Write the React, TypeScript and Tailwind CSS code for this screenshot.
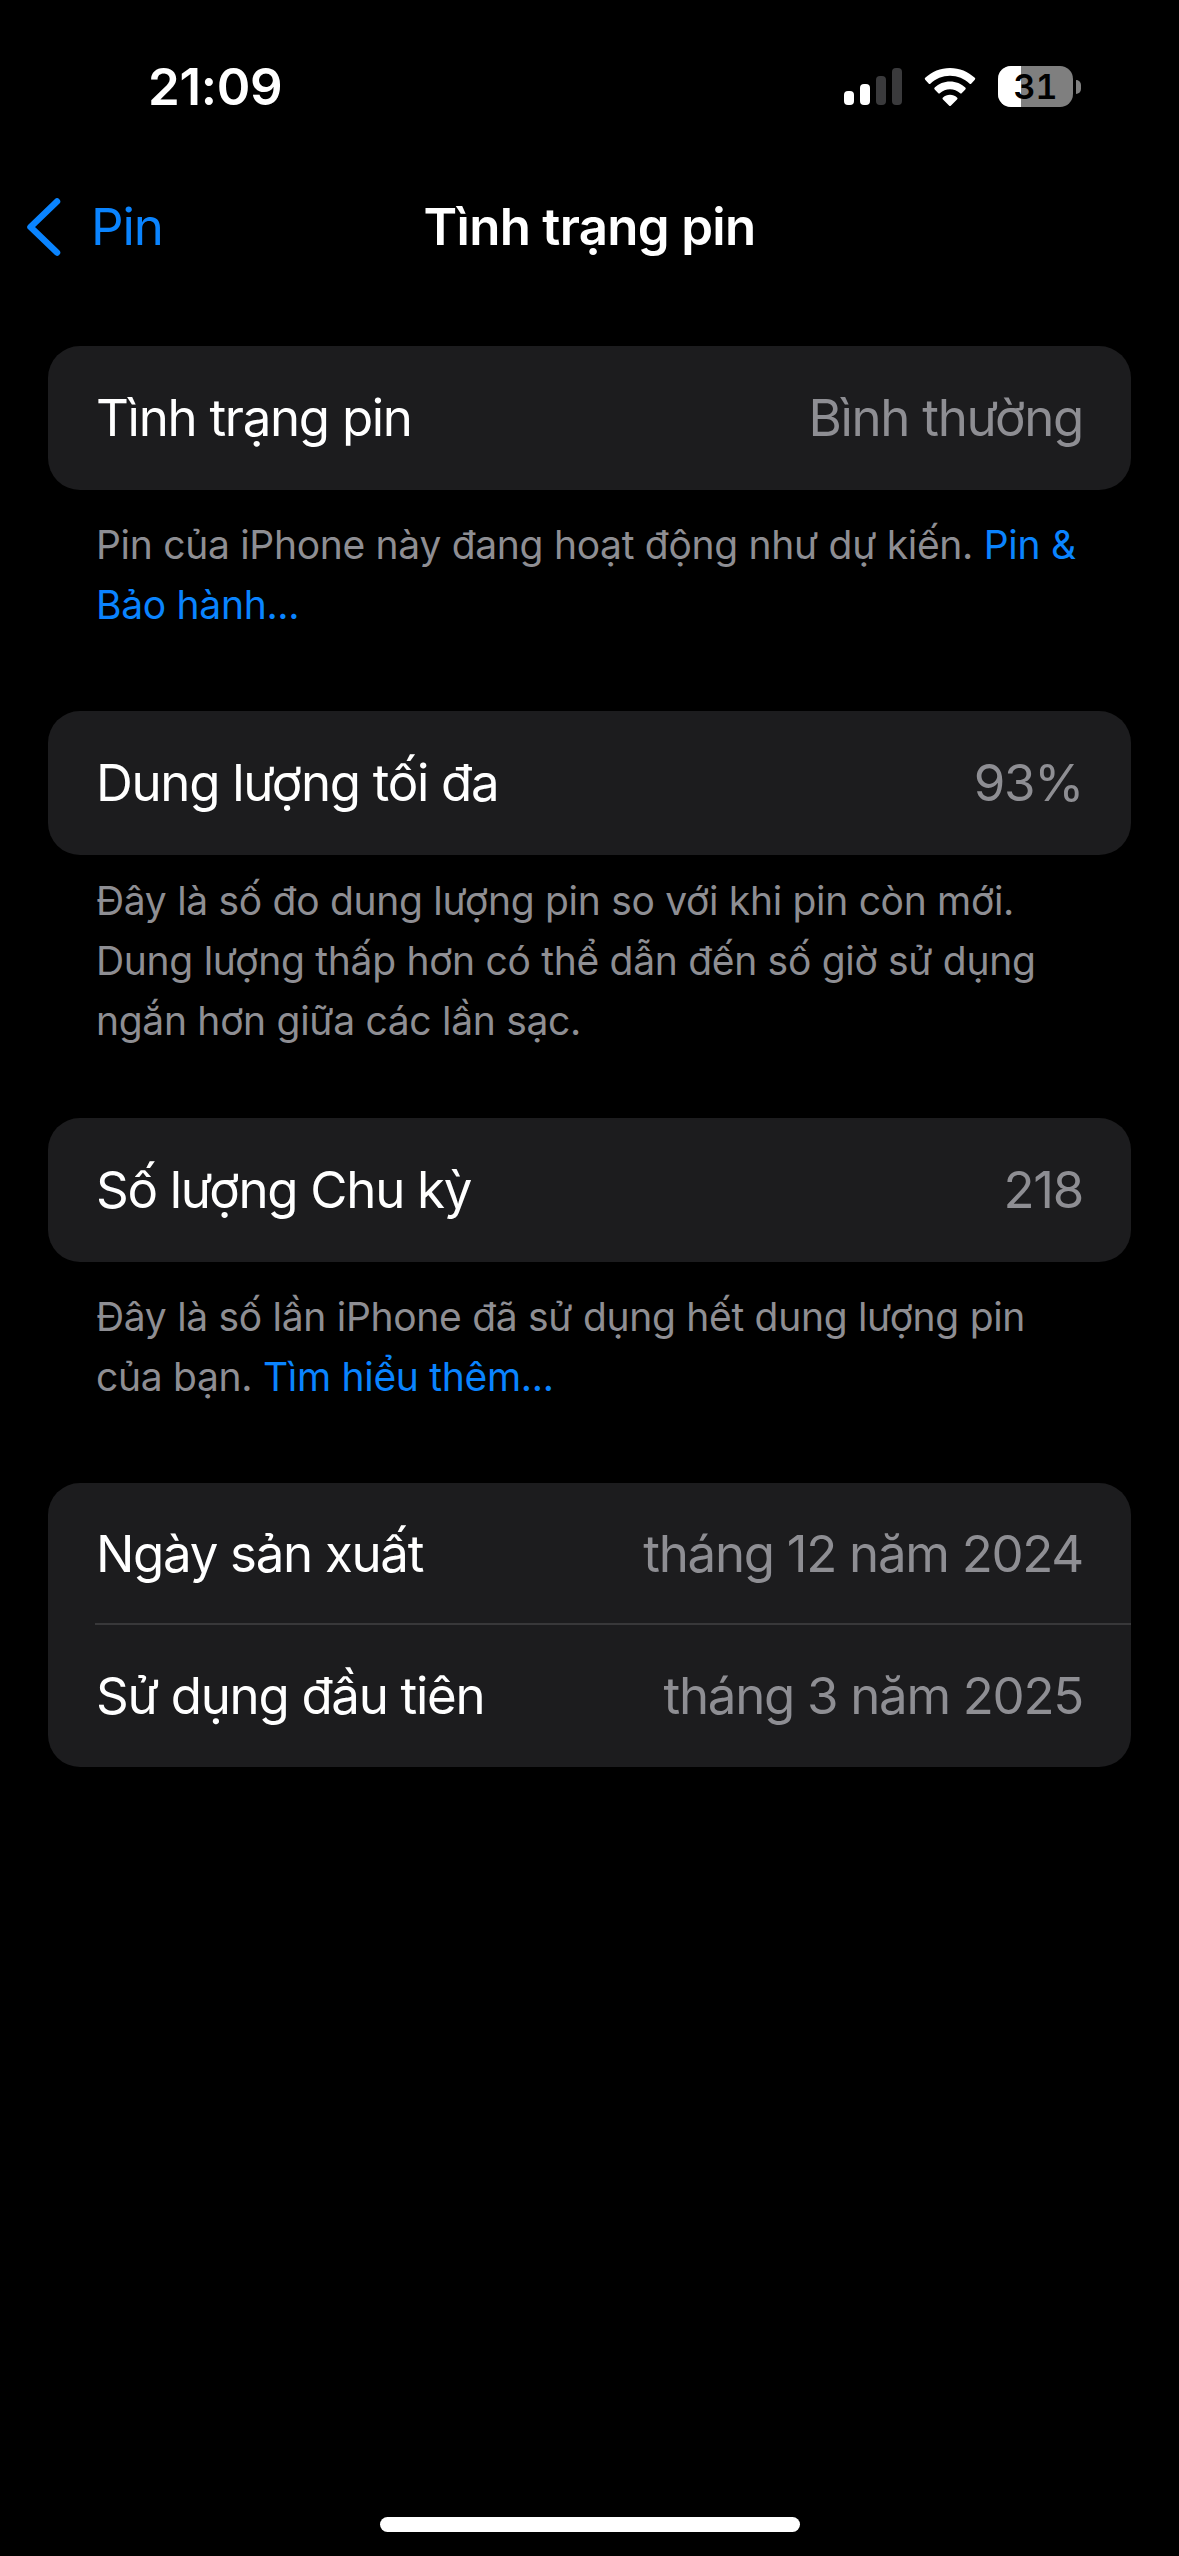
import React from 'react';

const Row: React.FC<{ label: string; value: string; divider?: boolean }> = ({ label, value, divider }) => (
  <div className="relative flex flex-1 items-center justify-between pl-[48px] pr-[48px]">
    <span className="text-[51px] leading-[60px] tracking-[-1.3px] text-white">{label}</span>
    <span className="text-[51px] leading-[60px] tracking-[-1.3px] text-[#8e8e93]">{value}</span>
    {divider && <div className="absolute bottom-0 left-[47px] right-0 h-[2px] bg-[#38383a]" />}
  </div>
);

const Card: React.FC<{ className: string; children: React.ReactNode }> = ({ className, children }) => (
  <div className={`flex flex-col overflow-hidden rounded-[32px] bg-[#1c1c1e] ${className}`}>{children}</div>
);

const Note: React.FC<{ className: string; children: React.ReactNode }> = ({ className, children }) => (
  <p className={`px-[48px] text-[39px] leading-[60px] tracking-[-0.3px] text-[#8e8e93] ${className}`}>{children}</p>
);

const Link: React.FC<{ children: React.ReactNode }> = ({ children }) => (
  <span className="text-[#0a84ff]">{children}</span>
);

export default function App() {
  return (
    <div className="flex h-[2556px] w-[1179px] flex-col overflow-hidden bg-black font-['Inter',sans-serif]">
      {/* status bar */}
      <div className="flex h-[174px] items-center justify-between pb-[1px] pl-[148px] pr-[98px]">
        <span className="text-[51px] font-semibold leading-[60px] tracking-[-0.3px] text-white">21:09</span>
        <div className="flex items-center gap-[22px]">
          <svg width="58" height="38" viewBox="0 0 58 38">
            <rect x="0" y="23" width="10" height="14" rx="4" fill="#fff" />
            <rect x="16" y="16" width="10" height="21" rx="4" fill="#fff" />
            <rect x="32" y="8" width="10" height="29" rx="4" fill="#3a3a3c" />
            <rect x="48" y="0" width="10" height="37" rx="4" fill="#3a3a3c" />
          </svg>
          <svg width="52" height="38" viewBox="0 0 52 38">
            <path d="M26 0C16.500 0 7.800 3.700 1.200 9.800a1.400 1.400 0 0 0 0 2L4.600 15.400a1.400 1.400 0 0 0 2 0C11.700 10.600 18.500 7.700 26 7.700s14.300 2.900 19.400 7.700a1.400 1.400 0 0 0 2 0l3.400-3.600a1.400 1.400 0 0 0 0-2C44.200 3.700 35.500 0 26 0Z" fill="#fff" />
            <path d="M26 13.500c-5.900 0-11.300 2.300-15.300 6a1.400 1.400 0 0 0 0 2l3.400 3.600a1.400 1.400 0 0 0 2 0c2.600-2.400 6.100-3.900 9.900-3.900s7.300 1.500 9.900 3.900a1.400 1.400 0 0 0 2 0l3.400-3.600a1.400 1.400 0 0 0 0-2c-4-3.700-9.400-6-15.300-6Z" fill="#fff" />
            <path d="M26 26.800c-2.700 0-5.100 1-7 2.700a1.300 1.300 0 0 0 0 1.900l6 6.200a1.400 1.400 0 0 0 2 0l6-6.200a1.300 1.300 0 0 0 0-1.900c-1.900-1.700-4.300-2.700-7-2.700Z" fill="#fff" />
          </svg>
          <div className="flex items-center gap-[3px]">
            <div className="relative flex h-[41px] w-[75px] items-center justify-center overflow-hidden rounded-[13px] bg-[#7f7f7f]">
              <div className="absolute inset-y-0 left-0 w-[23px] bg-white" />
              <span className="relative text-[34px] font-semibold leading-[41px] tabular-nums text-black">31</span>
            </div>
            <div className="h-[14px] w-[5px] rounded-r-full bg-[#7f7f7f]" />
          </div>
        </div>
      </div>

      {/* nav bar */}
      <div className="relative flex h-[106px] items-center justify-center">
        <div className="absolute left-[26px] top-0 flex h-full items-center">
          <svg width="36" height="58" viewBox="0 0 36 58" fill="none">
            <path d="M31 3.500 4.500 29 31 54.500" stroke="#0a84ff" strokeWidth="6.500" strokeLinecap="round" strokeLinejoin="round" />
          </svg>
          <span className="ml-[29px] text-[51px] leading-[60px] tracking-[-1.1px] text-[#0a84ff]">Pin</span>
        </div>
        <h1 className="text-[51px] font-semibold leading-[60px] tracking-[-0.7px] text-white">Tình trạng pin</h1>
      </div>

      {/* content */}
      <div className="flex flex-col px-[48px] pt-[66px]">
        <Card className="h-[144px]">
          <Row label="Tình trạng pin" value="Bình thường" />
        </Card>
        <Note className="pt-[25px]">
          Pin của iPhone này đang hoạt động như dự kiến. <Link>Pin &amp;</Link>
          <br />
          <Link>Bảo hành...</Link>
        </Note>

        <Card className="mt-[76px] h-[144px]">
          <Row label="Dung lượng tối đa" value="93%" />
        </Card>
        <Note className="pt-[16px]">
          Đây là số đo dung lượng pin so với khi pin còn mới. Dung lượng thấp hơn có thể dẫn đến số giờ sử dụng ngắn hơn giữa các lần sạc.
        </Note>

        <Card className="mt-[67px] h-[144px]">
          <Row label="Số lượng Chu kỳ" value="218" />
        </Card>
        <Note className="pt-[25px]">
          Đây là số lần iPhone đã sử dụng hết dung lượng pin của bạn. <Link>Tìm hiểu thêm...</Link>
        </Note>

        <Card className="mt-[76px] h-[284px]">
          <Row label="Ngày sản xuất" value="tháng 12 năm 2024" divider />
          <Row label="Sử dụng đầu tiên" value="tháng 3 năm 2025" />
        </Card>
      </div>

      {/* home indicator */}
      <div className="mt-auto flex justify-center pb-[24px]">
        <div className="h-[15px] w-[420px] rounded-full bg-white" />
      </div>
    </div>
  );
}
